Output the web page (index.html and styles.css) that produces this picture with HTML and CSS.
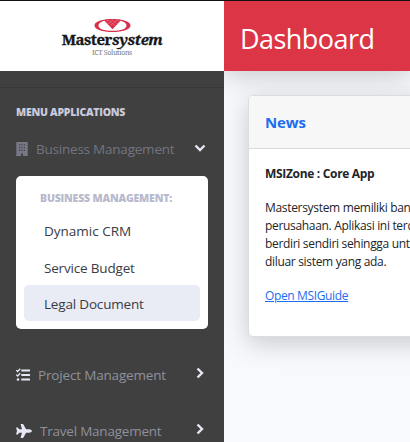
FILE: index.html
```html
<!DOCTYPE html>
<html lang="id">
<head>
<meta charset="utf-8">
<title>Dashboard</title>
<link rel="stylesheet" href="styles.css">
</head>
<body>
<div class="app">
  <aside class="sidebar">
    <div class="brand">
      <svg class="brand-mark" viewBox="0 0 37 15" width="37" height="15">
        <path fill="#d92d48" fill-rule="evenodd" d="M18.500 1C28.500 1 36.500 3.500 36.500 7.500S28.500 14 18.500 14 .5 11.500 .5 7.500 8.500 1 18.500 1zm0 1C10 2 4.500 4 4.500 7.500S10 12.800 18.500 12.800 32.500 11 32.500 7.500 27 2 18.500 2z"/>
        <path d="M10 2.200C14 1 23 1 27 2.200L18.500 11.300Z" fill="#d92d48"/>
        <path d="M11.500 4.100l3-2.500M13.500 6.200l6-5M15.500 8.200l8-6.600M25.500 4.100l-3-2.500M23.500 6.200l-6-5M21.500 8.200l-8-6.600" stroke="#f3a3b0" stroke-width=".4" fill="none"/>
      </svg>
      <div class="brand-name">Master<i>system</i></div>
      <div class="brand-sub">ICT Solutions</div>
    </div>
    <nav class="menu">
      <div class="menu-title"><span>MENU APPLICATIONS</span></div>
      <a class="item open">
        <svg class="icon building" viewBox="0 0 12 14" width="12" height="14"><path fill="currentColor" fill-rule="evenodd" d="M.3 0h11.400v13H12v1H7v-2.600H5V14H0v-1h.3zM3 2.200v1.200h1.200V2.200zm2.400 0v1.200h1.200V2.200zm2.400 0v1.200H9V2.200zM3 5v1.200h1.200V5zm2.400 0v1.200h1.200V5zm2.400 0v1.200H9V5zM3 7.800V9h1.200V7.800zm2.400 0V9h1.200V7.800zm2.400 0V9H9V7.800z"/></svg>
        <span class="label business">Business Management</span>
        <svg class="arrow" viewBox="0 0 12 12" width="12" height="12"><path d="M1.500 3.500 6 8l4.500-4.500" fill="none" stroke="currentColor" stroke-width="2.400"/></svg>
      </a>
      <div class="submenu">
        <div class="submenu-title"><span>BUSINESS MANAGEMENT:</span></div>
        <a class="sub first"><span>Dynamic CRM</span></a>
        <a class="sub"><span>Service Budget</span></a>
        <a class="sub active"><span>Legal Document</span></a>
      </div>
      <a class="item">
        <svg class="icon" viewBox="0 0 14 14" width="14" height="14"><g fill="none" stroke="currentColor"><path d="M5.300 2.500H14M5.300 7H14M5.300 11.500H14" stroke-width="2"/><path d="M.3 2.200l1.300 1.300L4.200.8M.3 6.700 1.600 8l2.600-2.700" stroke-width="1.300"/></g><circle cx="2" cy="11.500" r="1.300" fill="currentColor"/></svg>
        <span class="label project">Project Management</span>
        <svg class="arrow" viewBox="0 0 12 12" width="12" height="12"><path d="M3.500 1.500 8 6l-4.500 4.500" fill="none" stroke="currentColor" stroke-width="2.400"/></svg>
      </a>
      <a class="item">
        <svg class="icon" viewBox="0 0 576 512" width="16" height="14"><path fill="currentColor" d="M480 192H365.700L260.600 8.100A16 16 0 0 0 246.700 0h-65.500c-10.600 0-18.300 10.200-15.400 20.400L214.900 192H112l-43.200-57.600c-3-4-7.800-6.400-12.800-6.400H16c-10.400 0-18 9.800-15.500 19.900L32 256 .5 364.100C-2 374.200 5.600 384 16 384h40c5 0 9.800-2.400 12.800-6.400L112 320h102.900l-49 171.600c-3 10.200 4.700 20.400 15.300 20.400h65.500c5.700 0 11-3.100 13.900-8.100L365.700 320H480c35.300 0 96-28.700 96-64s-60.700-64-96-64z"/></svg>
        <span class="label travel">Travel Management</span>
        <svg class="arrow" viewBox="0 0 12 12" width="12" height="12"><path d="M3.500 1.500 8 6l-4.500 4.500" fill="none" stroke="currentColor" stroke-width="2.400"/></svg>
      </a>
    </nav>
  </aside>
  <div class="content">
    <header class="topbar"><h1>Dashboard</h1></header>
    <section class="card">
      <div class="card-head"><span>News</span></div>
      <div class="card-body">
        <p class="lead">MSIZone : Core App</p>
        <p class="text">Mastersystem memiliki banyak<br>perusahaan. Aplikasi ini terdiri<br>berdiri sendiri sehingga untuk<br>diluar sistem yang ada.</p>
        <p class="link"><a>Open MSIGuide</a></p>
      </div>
    </section>
  </div>
</div>
</body>
</html>
```
FILE: styles.css
```css
* { box-sizing: border-box; }
html, body { height: 100%; }
body {
  margin: 0;
  overflow: hidden;
  font-family: "Open Sans", "Noto Sans", sans-serif;
  background: #f8f9fc;
}
p, h1 { margin: 0; font-weight: 400; }
.app {
  display: flex;
  height: 442px;
  overflow: hidden;
  border-top: 1px solid #161214;
}
.sidebar {
  position: relative;
  z-index: 1;
  width: 224px;
  flex: none;
  background: #404040;
}
.brand {
  height: 70px;
  padding-top: 17px;
  background: #fff;
  display: flex;
  flex-direction: column;
  align-items: center;
}
.brand-mark { display: block; flex: none; margin-left: 1px; }
.brand-name {
  margin-top: -2px;
  font: bold 15px/17px "Noto Serif", "DejaVu Serif", serif;
  letter-spacing: -0.45px;
  -webkit-text-stroke: 0.3px #171717;
  color: #171717;
  white-space: nowrap;
}
.brand-sub {
  font: 7px/9px "Noto Serif", "DejaVu Serif", serif;
  letter-spacing: -0.3px;
  color: #777;
}
.menu { margin-top: 16px; border-top: 1px solid #373737; }
.menu-title {
  height: 17px;
  margin: 16px 0 0 16px;
  font-size: 10.5px;
  line-height: 17px;
  font-weight: 800;
  letter-spacing: -0.26px;
  color: #c9cadb;
  white-space: nowrap;
}
.item {
  display: flex;
  align-items: center;
  height: 56px;
  padding: 0 18px 0 16px;
  color: #e6e7f4;
}
.item.open { height: 55px; }
.icon { flex: none; }
.building { color: #777887; }
.label {
  margin-left: 8px;
  font-size: 13.5px;
  letter-spacing: -0.22px;
  white-space: nowrap;
  color: #8f909b;
}
.project { letter-spacing: -0.17px; }
.open .label { color: #737480; }
.arrow { margin-left: auto; flex: none; position: relative; top: -2px; }
.open .arrow { top: -1px; }
.submenu {
  width: 192px;
  height: 153px;
  margin: 0 16px 18px;
  padding: 13px 8px 8px;
  border-radius: 5px;
  background: #fff;
}
.submenu-title {
  height: 24px;
  padding-left: 16px;
  font-size: 10.5px;
  line-height: 19px;
  font-weight: 800;
  letter-spacing: -0.18px;
  color: #b7b9cc;
  white-space: nowrap;
}
.sub {
  display: block;
  height: 36px;
  padding-left: 20px;
  border-radius: 5px;
  font-size: 13.5px;
  line-height: 38px;
  letter-spacing: -0.18px;
  color: #3a3b45;
}
.first { line-height: 37px; letter-spacing: 0; }
.active { background: #e9ecf4; }
.content { flex: 1; min-width: 0; }
.topbar {
  height: 70px;
  padding-left: 16px;
  background: #dc3545;
  color: #fff;
  box-shadow: 0 2px 28px rgba(58, 59, 69, .3);
}
.topbar h1 { font-size: 27px; line-height: 75px; letter-spacing: -0.55px; }
.card {
  width: 500px;
  height: 242px;
  margin: 24px 0 0 24px;
  border: 1px solid #dcdde1;
  border-radius: 5px;
  background: #fff;
  box-shadow: 0 6px 24px rgba(58, 59, 69, .25);
}
.card-head {
  height: 53px;
  padding-left: 16px;
  border-bottom: 1px solid #d9dadc;
  border-radius: 4px 4px 0 0;
  background: #f7f7f7;
  color: #1c6df0;
  font-size: 15px;
  line-height: 53px;
  font-weight: 700;
  letter-spacing: -0.1px;
}
.card-body {
  padding: 16px;
  font-size: 12px;
  line-height: 18px;
  letter-spacing: -0.32px;
  color: #212529;
  white-space: nowrap;
}
.lead { font-weight: 700; margin-bottom: 16px; }
.text { margin-bottom: 16px; }
.link { color: #1c6df0; text-decoration: underline; letter-spacing: -0.36px; }
```
